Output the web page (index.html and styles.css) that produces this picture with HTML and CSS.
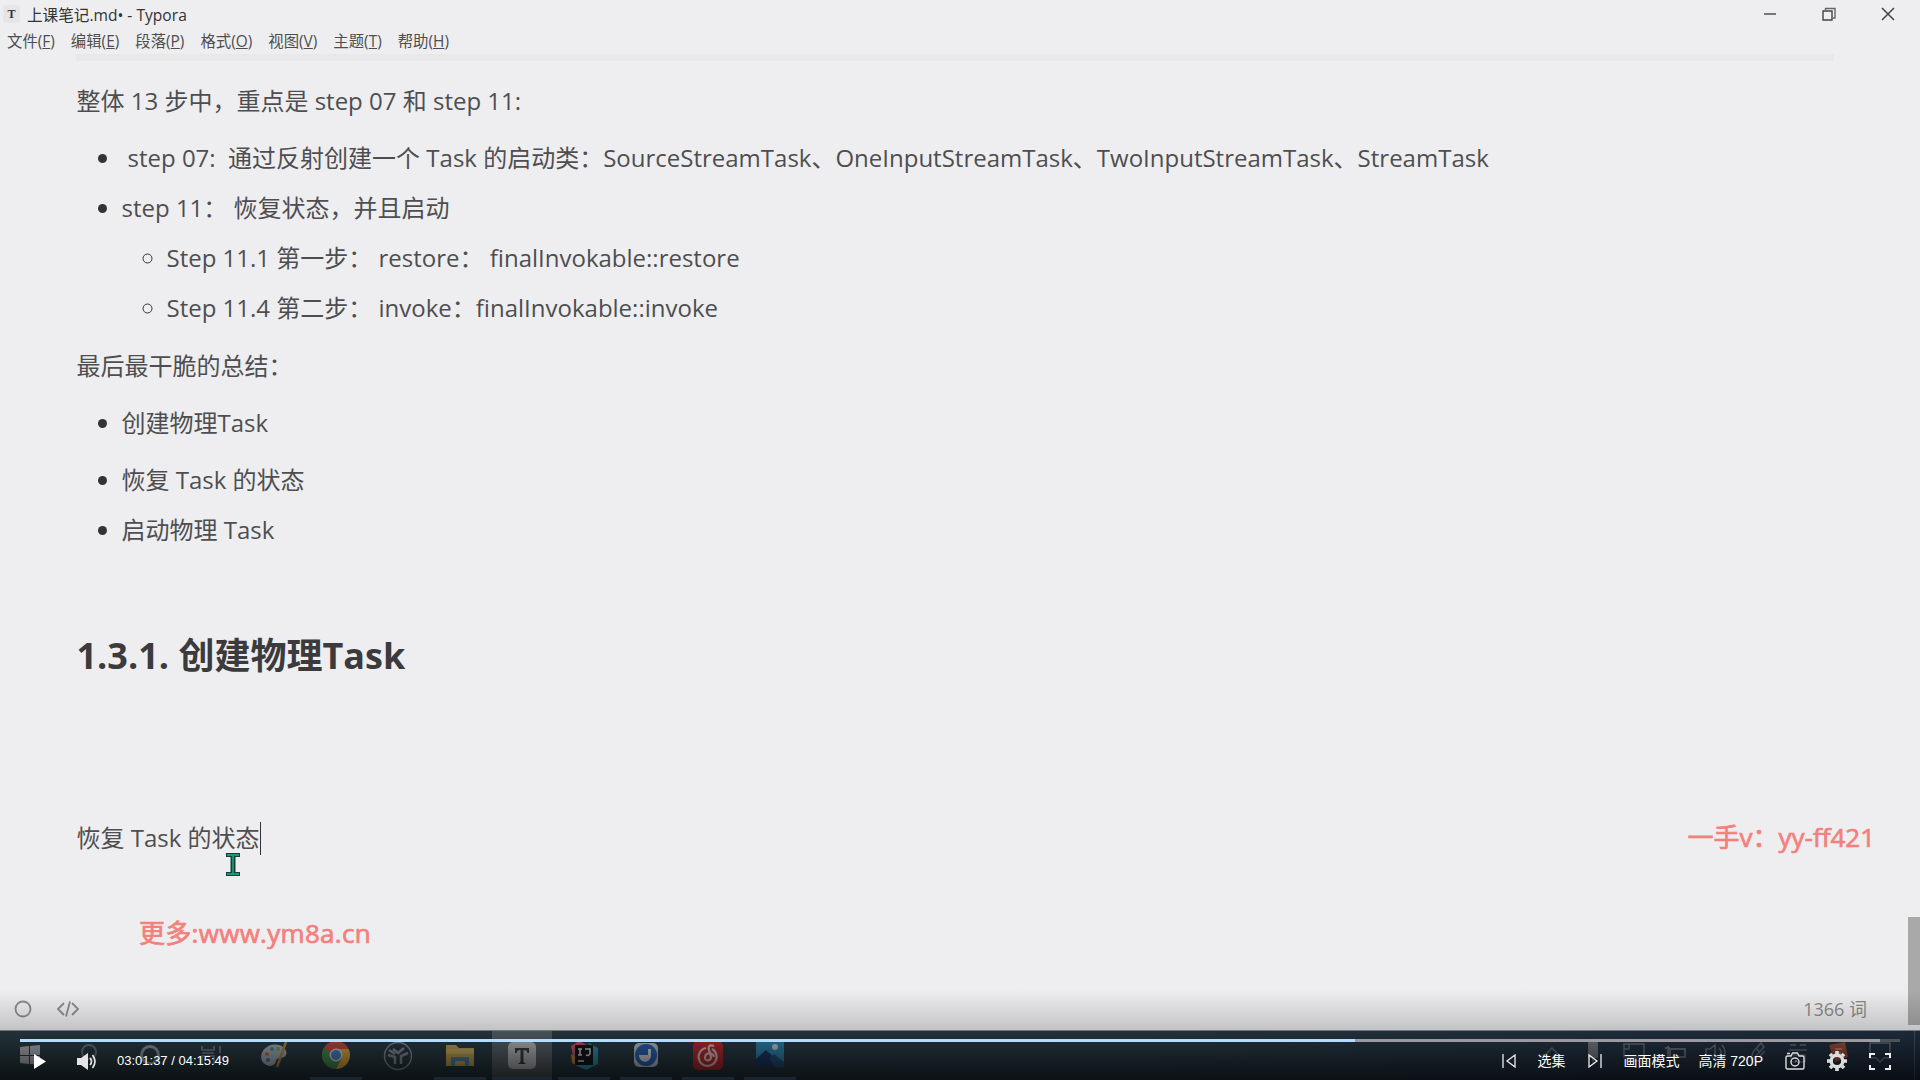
FILE: index.html
```html
<!DOCTYPE html>
<html lang="zh-CN">
<head>
    <meta charset="UTF-8">
    <meta name="viewport" content="width=device-width, initial-scale=1.0">
    <title>上课笔记.md - Typora</title>
    <link rel="stylesheet" href="styles.css">
</head>
<body>
<div class="player">

    <!-- 视频画面：Typora 窗口 -->
    <div class="desktop">
        <div class="titlebar">
            <span class="app-icon">T</span>
            <span class="title">上课笔记.md• - Typora</span>
            <div class="window-buttons">
                <svg width="14" height="14" viewBox="0 0 14 14"><path d="M1 7h12" stroke="#777" stroke-width="2"/></svg>
                <svg width="14" height="14" viewBox="0 0 14 14" fill="none" stroke="#444" stroke-width="1.4"><path d="M1 4h9v9H1z"/><path d="M3.5 4V1.5h9.5V11h-3" stroke="#666"/></svg>
                <svg width="14" height="14" viewBox="0 0 14 14" stroke="#444" stroke-width="1.5"><path d="M1 1l12 12M13 1L1 13"/></svg>
            </div>
        </div>
        <div class="menubar">
            <span>文件(<u>F</u>)</span>
            <span>编辑(<u>E</u>)</span>
            <span>段落(<u>P</u>)</span>
            <span>格式(<u>O</u>)</span>
            <span>视图(<u>V</u>)</span>
            <span>主题(<u>T</u>)</span>
            <span>帮助(<u>H</u>)</span>
        </div>

        <div class="document">
            <div class="block-edge"></div>
            <p>整体 13 步中，重点是 step 07 和 step 11:</p>
            <ul class="steps">
                <li class="indent">step 07:&nbsp; 通过反射创建一个 Task 的启动类：SourceStreamTask、OneInputStreamTask、TwoInputStreamTask、StreamTask</li>
                <li>step 11： 恢复状态，并且启动
                    <ul>
                        <li>Step 11.1 第一步： restore： finalInvokable::restore</li>
                        <li>Step 11.4 第二步： invoke：finalInvokable::invoke</li>
                    </ul>
                </li>
            </ul>
            <p>最后最干脆的总结：</p>
            <ul>
                <li class="loose">创建物理Task</li>
                <li>恢复 Task 的状态</li>
                <li>启动物理 Task</li>
            </ul>
            <h3>1.3.1. 创建物理Task</h3>
            <p>恢复 Task 的状态<span class="caret"></span></p>
        </div>

        <div class="statusbar">
            <svg width="20" height="20" viewBox="0 0 20 20"><circle cx="10" cy="10" r="7.5" fill="none" stroke="#8b8b8b" stroke-width="1.8"/></svg>
            <svg class="code-icon" width="24" height="18" viewBox="0 0 24 18" fill="none" stroke="#8b8b8b" stroke-width="1.8"><path d="M8 3L2 9l6 6M16 3l6 6-6 6M14 1.5L10 16.5"/></svg>
            <span class="word-count">1366 词</span>
        </div>

        <!-- 任务栏 -->
        <div class="taskbar">
            <div class="task"><svg viewBox="0 0 30 30"><path d="M5 6l9-1v9H5zM15 5l10-1v10H15zM5 15h9v8l-9-1zM15 15h10v9l-10-1z" fill="#b4b6bd"/></svg></div>
            <div class="task"><svg viewBox="0 0 30 30" fill="none" stroke="#6c7880" stroke-width="2"><circle cx="16" cy="11" r="7"/><path d="M11 16l-7 7"/></svg></div>
            <div class="task"><svg viewBox="0 0 30 30"><circle cx="15" cy="14" r="8.5" fill="none" stroke="#8e9aa2" stroke-width="3"/></svg></div>
            <div class="task"><svg viewBox="0 0 30 30" fill="none" stroke="#7d878f" stroke-width="1.6"><path d="M5 5v4h12V5M5 23v-8h12v8M5 12h12M23 5v7M23 14v9"/></svg></div>
            <div class="task"><svg viewBox="0 0 30 30"><path d="M3 20C-1 11 9 1 20 4c7 2 10 9 5 12-3 2-7 0-8 4-1 7-11 6-14 0z" fill="#a5b6bc"/><circle cx="8" cy="13" r="2" fill="#d0654b"/><circle cx="13" cy="8" r="2" fill="#4a8db0"/><circle cx="19" cy="8" r="2" fill="#75aa61"/><circle cx="9" cy="19" r="2" fill="#4a71ae"/><path d="M27 1l-9 25" stroke="#c08549" stroke-width="2.5"/></svg></div>
            <div class="task open"><svg viewBox="0 0 30 30"><circle cx="15" cy="14" r="14" fill="#d24c3d"/><path d="M2.9 7A14 14 0 0 0 15 28l5-10z" fill="#459553"/><path d="M15 28A14 14 0 0 0 27.6 8H15l6 9z" fill="#dcb147"/><circle cx="15" cy="14" r="6.5" fill="#d5dade"/><circle cx="15" cy="14" r="5" fill="#4a86cb"/></svg></div>
            <div class="task"><svg viewBox="0 0 30 30" fill="none" stroke="#89929a"><circle cx="15" cy="15" r="13.5" stroke-width="1.5"/><path d="M6 9l6 4M10 8l5 4 6-5M25 12l-7 3v8M5 14l7 2v7" stroke-width="2.6"/></svg></div>
            <div class="task open"><svg viewBox="0 0 30 30"><path d="M1 4h10l3 3h15v18H1z" fill="#c4a755"/><path d="M1 8h28v5H1z" fill="#d3b763"/><path d="M6 25v-9h18v9h-4v-5H10v5z" fill="#4b88ad"/></svg></div>
            <div class="task open active"><svg viewBox="0 0 30 30"><rect x="1" y="1" width="28" height="27" rx="5" fill="#b9bbbd"/><path d="M8 7h14v5h-1.5c-.5-2-1.5-3-4-3v11c0 1.500 1 2 2 2v1h-7v-1c1 0 2-.5 2-2V9c-2.500 0-3.500 1-4 3H8z" fill="#3c3f42"/></svg></div>
            <div class="task open"><svg viewBox="0 0 30 30"><path d="M2 5l8-5 8 4v22L6 24z" fill="#c95b6e"/><path d="M2 13l6 3v9l-5-3z" fill="#c48042"/><path d="M20 2l9 5v16l-12 6-9-4z" fill="#2c93b3"/><rect x="6" y="4" width="18" height="20" fill="#14171a"/><path d="M9 8h4M11 8v6M9 14h4M16 8h5v4c0 2-2 3-4 2M9 20h6" stroke="#d8d8d8" stroke-width="1.6" fill="none"/></svg></div>
            <div class="task open"><svg viewBox="0 0 30 30"><rect x="3" y="2" width="24" height="24" rx="5" fill="#bcc8d0"/><circle cx="15" cy="14" r="11" fill="#2b65b8"/><path d="M8 14h9V8h3v6c0 9-12 9-12 0z" fill="#d8dee4"/></svg></div>
            <div class="task open"><svg viewBox="0 0 30 30"><rect x="0" y="0" width="30" height="29" rx="5" fill="#bb2d33"/><path d="M13 7a9 9 0 1 0 6 1M21 5c-5-2-6 1-5 4l2 7c0 5-7 4-6 0 1-5 8-5 9 0" fill="none" stroke="#dfc6c3" stroke-width="2.2"/></svg></div>
            <div class="task open"><svg viewBox="0 0 30 30"><path d="M1 0h28v26H1z" fill="#3187b2"/><path d="M1 18l10-9 18 17H1z" fill="#1a3a63"/><path d="M14 17l5-4 10 8v5H20z" fill="#245180"/><circle cx="20" cy="6" r="3" fill="#bfd2da"/></svg></div>

            <div class="tray">
                <svg viewBox="0 0 22 22"><path d="M4 14l7-7 7 7"/></svg>
                <svg viewBox="0 0 22 22"><rect x="6" y="1" width="10" height="16" rx="1" fill="#7b828c" stroke="none"/><path d="M11 17v5"/></svg>
                <svg viewBox="0 0 22 22"><path d="M1 3h20v13H1zM6 20h10M1 8h5V3"/></svg>
                <svg viewBox="0 0 22 22"><path d="M6 8h15v8H6zM1 7h5M4 5v13" stroke-width="2"/></svg>
                <svg viewBox="0 0 22 22"><path d="M1 8h4l5-4v14l-5-4H1zM14 7q4 4 0 8M17 4q6 7 0 14"/></svg>
                <svg viewBox="0 0 22 22"><path d="M5 19l2-8 8-9 3 4-9 10zM11 8l3 4M13 16l6-6"/></svg>
                <svg viewBox="0 0 22 22"><path d="M3 4h6M13 4h6M2 9h18M4 14h14v7H4z"/></svg>
                <svg viewBox="0 0 22 22"><path d="M1 4l16-3 3 15-13 5z" fill="#a5523a" stroke="none"/><path d="M7 8h7M8 12h5" stroke="#c99c8e"/></svg>
                <svg viewBox="0 0 22 22"><path d="M1 2h20v15h-6l-4 4-4-4H1z"/></svg>
            </div>
        </div>
        <div class="scroll-thumb"></div>
        <svg class="mouse" width="16" height="25" viewBox="0 0 16 25"><path d="M1 1h14v4H10.500v15H15v4H1v-4h4.500V5H1z" fill="#163f38"/><path d="M2 3h12M2 22h12M8 3v19" stroke="#149a78" stroke-width="1.8"/></svg>
    </div>

    <!-- 水印 -->
    <div class="watermark mark-right">一手v：yy-ff421</div>
    <div class="watermark mark-left">更多:www.ym8a.cn</div>

    <!-- 播放控制条 -->
    <div class="controls">
        <div class="progress"><div class="buffered"></div><div class="played" style="width: 71.02%"></div></div>
        <div class="control-row">
            <svg class="play" width="12" height="15" viewBox="0 0 12 15"><path d="M0 0l12 7.5L0 15z" fill="#fff"/></svg>
            <svg class="volume" width="20" height="17" viewBox="0 0 20 17"><path d="M0 5h4l7-5v17l-7-5H0z" fill="#e4e4e4"/><path d="M13 5q3 3.500 0 7M15.500 2q5 6.500 0 13" fill="none" stroke="#e4e4e4" stroke-width="1.7"/></svg>
            <span class="time">03:01:37 / 04:15:49</span>
            <div class="right">
                <svg class="prev" width="14" height="14" viewBox="0 0 14 14" fill="none" stroke="#eee" stroke-width="1.3"><path d="M1 0v14M13 1v12L5 7z"/></svg>
                <span class="select">选集</span>
                <svg class="next" width="14" height="14" viewBox="0 0 14 14" fill="none" stroke="#eee" stroke-width="1.3"><path d="M13 0v14M1 1v12l8-6z"/></svg>
                <span class="mode">画面模式</span>
                <span class="quality">高清 720P</span>
                <svg class="camera" width="20" height="18" viewBox="0 0 20 18" fill="none" stroke="#ddd" stroke-width="1.4"><path d="M2.500 4H6l1.500-3h5L14 4h3.500q1.500 0 1.500 1.500v10q0 1.500-1.500 1.500h-15Q1 17 1 15.500v-10Q1 4 2.500 4z"/><circle cx="10" cy="10" r="4"/><path d="M10.500 9h1M2 1.500h3"/></svg>
                <svg class="gear" width="20" height="20" viewBox="0 0 20 20"><circle cx="10" cy="10" r="5.8" fill="none" stroke="#ddd" stroke-width="3.4"/><path d="M10 0v3M10 17v3M0 10h3M17 10h3M3 3l2 2M15 15l2 2M17 3l-2 2M5 15l-2 2" stroke="#ddd" stroke-width="3.6"/></svg>
                <svg class="full" width="22" height="17" viewBox="0 0 22 17" fill="none" stroke="#eee" stroke-width="2"><path d="M1 5V1h5M16 1h5v4M21 12v4h-5M6 16H1v-4"/></svg>
            </div>
        </div>
    </div>
</div>
</body>
</html>
```
FILE: styles.css
```css
* {
    margin: 0;
    padding: 0;
    box-sizing: border-box;
}

body {
    width: 1920px;
    height: 1080px;
    overflow: hidden;
    font-family: "Open Sans", "Noto Sans CJK SC", sans-serif;
}

.player {
    position: relative;
    width: 1920px;
    height: 1080px;
    overflow: hidden;
}

.desktop {
    display: flex;
    flex-direction: column;
    height: 1080px;
    background: #eeeef0;
    color: #4e4e50;
}

/* 标题栏 */
.titlebar {
    display: flex;
    align-items: center;
    height: 28px;
    padding: 0 25px 0 3px;
    color: #333;
    font-size: 15.6px;
}

.app-icon {
    width: 17px;
    height: 18px;
    margin-right: 7px;
    border-radius: 3px;
    background: #e6e6e7;
    font: bold 12px/18px "Liberation Serif", serif;
    text-align: center;
}

.window-buttons {
    display: flex;
    gap: 45px;
    margin-left: auto;
}

.menubar {
    display: flex;
    gap: 16px;
    height: 25px;
    padding-left: 7px;
    font-size: 15.4px;
    line-height: 28px;
    white-space: nowrap;
}

.menubar u {
    text-underline-offset: 1px;
}

/* 正文 */
.document {
    flex: 1;
    padding: 0 76px 0 76.5px;
    font-size: 24px;
    line-height: 38px;
    white-space: nowrap;
}

.block-edge {
    height: 7px;
    margin: 1px 10px 21px -1px;
    background: #e8e8e9;
}

.document p {
    margin-bottom: 19px;
}

.document ul {
    padding-left: 45px;
    margin-bottom: 19px;
}

.document .steps {
    margin-bottom: 20px;
}

.document li {
    margin-bottom: 12px;
}

.document li::marker {
    color: #333;
}

.document li ul {
    margin: 12px 0 0;
}

.document .indent {
    padding-left: 6px;
}

.document .loose {
    margin-bottom: 19px;
}

.document h3 {
    margin: 82px 0 138px;
    color: #3b3b3d;
    font-size: 36px;
    line-height: 50px;
}

.caret {
    display: inline-block;
    width: 1px;
    height: 33px;
    margin-top: -5px;
    background: #333;
    vertical-align: middle;
}

.statusbar {
    display: flex;
    align-items: center;
    height: 42px;
    padding: 0 53px 0 13px;
    color: #8b8b8b;
    font-size: 18px;
}

.code-icon {
    margin-left: 23px;
}

.word-count {
    margin-left: auto;
    padding-bottom: 2px;
}

/* 任务栏 */
.taskbar {
    display: flex;
    height: 50px;
    border-top: 1px solid #8a9096;
    background: linear-gradient(90deg, #2a3d46, #2a3c47 60%, #223246);
}

.task {
    width: 52px;
    height: 49px;
    margin-right: 10px;
    padding: 10px 11px 0;
}

.task:first-child {
    margin-left: 4px;
    margin-right: 6px;
}

.task svg {
    width: 30px;
    height: 30px;
}

.open {
    border-bottom: 3px solid #5a7fa5;
}

.active {
    width: 60px;
    margin: 0 6px 0 -4px;
    padding-left: 15px;
    background: #58636a;
}

.tray {
    display: flex;
    gap: 19px;
    margin: 0 5px 0 auto;
    padding: 10px 23px 0 0;
    border-right: 1px solid #4c5763;
    fill: none;
    stroke: #6a7480;
    stroke-width: 1.5;
}

.tray svg {
    width: 22px;
    height: 22px;
}

.scroll-thumb {
    position: absolute;
    top: 917px;
    right: 0;
    width: 12px;
    height: 108px;
    background: #a9a9a9;
}

.mouse {
    position: absolute;
    top: 852px;
    left: 225px;
}

.watermark {
    position: absolute;
    color: #f3807c;
    font-size: 26px;
    line-height: 36px;
    white-space: nowrap;
    -webkit-text-stroke: 0.7px #f3807c;
}

.mark-right {
    top: 819px;
    right: 45px;
}

.mark-left {
    top: 915px;
    left: 139px;
    letter-spacing: 0.3px;
}

/* 控制条浮在画面上 */
.controls {
    position: absolute;
    right: 0;
    bottom: 0;
    left: 0;
    height: 90px;
    padding: 49px 20px 0;
    background: linear-gradient(rgba(0, 0, 0, 0), rgba(0, 0, 0, 0.18) 45%, rgba(0, 0, 0, 0.72));
    color: #fff;
}

.progress {
    position: relative;
    height: 3px;
    background: #4b525a;
}

.buffered {
    width: 1860px;
    height: 3px;
    background: #999ba1;
}

.played {
    position: absolute;
    top: 0;
    left: 0;
    height: 3px;
    background: #b3dcff;
}

.control-row {
    display: flex;
    align-items: center;
    height: 38px;
    padding-left: 14px;
    font: 14px "Liberation Sans", "Noto Sans CJK SC", sans-serif;
}

.volume {
    margin-left: 31px;
}

.time {
    margin-left: 20px;
    padding-bottom: 2px;
    font-size: 13px;
}

.right {
    display: flex;
    align-items: center;
    margin: 0 9px 0 auto;
    white-space: nowrap;
}

.select,
.mode,
.quality {
    padding-bottom: 2px;
}

.select,
.next,
.mode,
.camera,
.gear,
.full {
    margin-left: 22px;
}

.select {
    margin-left: 21px;
}

.next {
    margin-left: 23px;
}

.mode {
    margin-left: 21px;
}

.quality {
    margin-left: 19px;
}
```
